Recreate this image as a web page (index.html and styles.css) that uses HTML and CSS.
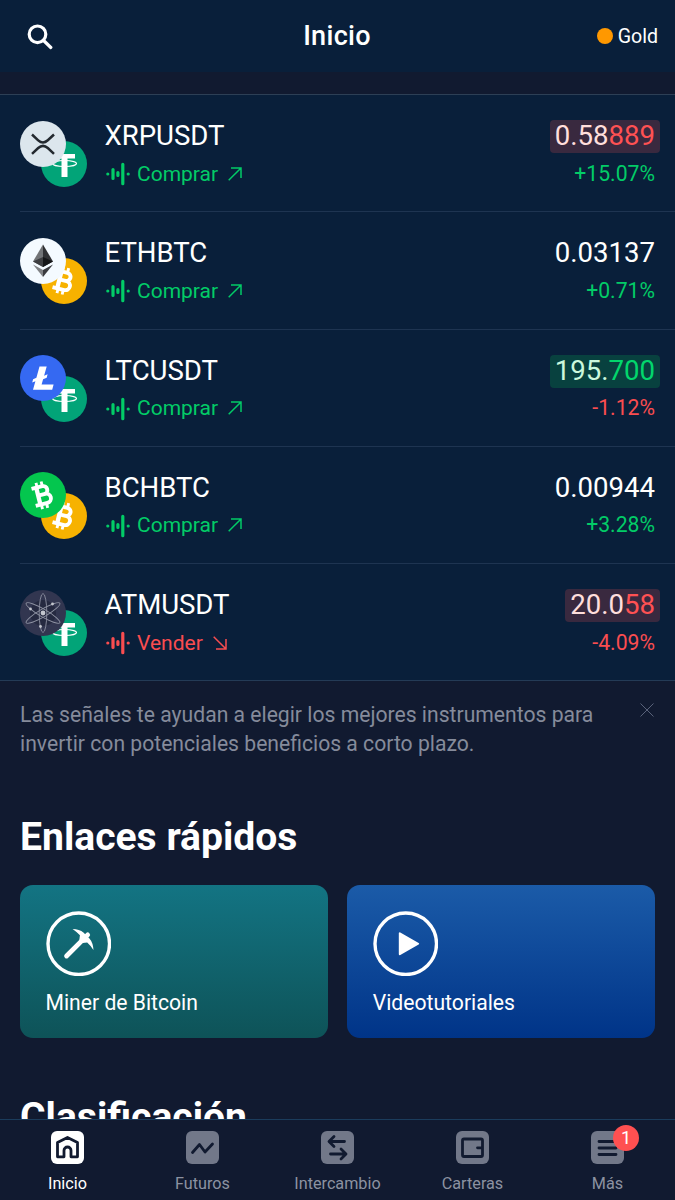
FILE: index.html
```html
<!doctype html>
<html lang="es">
  <head>
    <meta charset="utf-8">
    <title>Inicio</title>
    <link rel="stylesheet" href="styles.css">
  </head>
  <body>
    <svg class="sprite" aria-hidden="true">
      <symbol id="xrp" viewBox="0 0 46 46">
        <circle cx="23" cy="23" r="23" fill="#dce6ed"/>
        <path d="M12 13.500l6.200 5.800q4.800 4.300 9.600 0l6.200-5.800M12 32.800l6.200-5.800q4.800-4.300 9.600 0l6.200 5.800" fill="none" stroke="#23292f" stroke-width="2.500"/>
      </symbol>
      <symbol id="usdt" viewBox="0 0 46 46">
        <circle cx="23" cy="23" r="23" fill="#02a478"/>
        <path d="M13 13h21v4.500h-7.500V36h-6V17.500H13z" fill="#fff"/>
        <ellipse cx="23.500" cy="22.500" rx="12" ry="3" fill="none" stroke="#fff" stroke-width="1.200"/>
      </symbol>
      <symbol id="eth" viewBox="0 0 46 46">
        <circle cx="23" cy="23" r="23" fill="#f4faff"/>
        <path d="M23 6.500L13 23.500l10 5.500z" fill="#727477"/>
        <path d="M23 6.500l10 17L23 29z" fill="#303134"/>
        <path d="M13 23.500l10-4.500v10z" fill="#3d3e41"/>
        <path d="M33 23.500L23 19v10z" fill="#151618"/>
        <path d="M13 26.500l10 5.500v7z" fill="#808285"/>
        <path d="M33 26.500L23 32v7z" fill="#3a3b3f"/>
      </symbol>
      <symbol id="bit" viewBox="0 0 30 30">
        <path d="M5 6h11.500a4 4 0 0 1 0 8.400H10M5 24h12.500a4.600 4.600 0 0 0 0-9.600H10" fill="none" stroke="#fff" stroke-width="4"/>
        <path d="M10 5v20" stroke="#fff" stroke-width="4.500"/>
        <path d="M11 1v5M16.500 1v5M11 24v5M16.500 24v5" stroke="#fff" stroke-width="3"/>
      </symbol>
      <symbol id="btc" viewBox="0 0 46 46">
        <circle cx="23" cy="23" r="23" fill="#f7b200"/>
        <use href="#bit" x="8.500" y="8.500" width="29" height="29" transform="rotate(14 23 23)"/>
      </symbol>
      <symbol id="bch" viewBox="0 0 46 46">
        <circle cx="23" cy="23" r="23" fill="#04c64e"/>
        <use href="#bit" x="8.500" y="8.500" width="29" height="29" transform="rotate(-14 23 23)"/>
      </symbol>
      <symbol id="ltc" viewBox="0 0 46 46">
        <circle cx="23" cy="23" r="23" fill="#3569f2"/>
        <path d="M19.500 11.500h7.200l-2.600 9.200 3.500-1.400-.9 3.400-3.600 1.500-1.500 5.200h12l-1.400 5.300H13l2.400-8.400-3.200 1.300.9-3.400 3.300-1.400z" fill="#fff"/>
      </symbol>
      <symbol id="atom" viewBox="0 0 46 46">
        <circle cx="23" cy="23" r="23" fill="#323650"/>
        <circle cx="23" cy="23" r="13" fill="#252940"/>
        <g fill="none" stroke="#8d91a1" stroke-width="0.900">
          <ellipse cx="23" cy="23" rx="3.800" ry="19.500"/>
          <ellipse cx="23" cy="23" rx="3.800" ry="19.500" transform="rotate(60 23 23)"/>
          <ellipse cx="23" cy="23" rx="3.800" ry="19.500" transform="rotate(-60 23 23)"/>
        </g>
        <g fill="#c3c6ce">
          <circle cx="23" cy="23" r="2.400"/>
          <circle cx="10.500" cy="19" r="1.400"/>
          <circle cx="32.500" cy="14" r="1.400"/>
          <circle cx="20.500" cy="36.500" r="1.400"/>
        </g>
      </symbol>
      <symbol id="signal" viewBox="0 0 24 24">
        <g fill="none" stroke="currentColor" stroke-width="3.200" stroke-linecap="round">
          <path d="M1.800 12h.01M7 7.500v9M11.900 10.600v2.800M16.800 2.300v19.400M22.200 12h.01"/>
        </g>
      </symbol>
      <symbol id="up" viewBox="0 0 14 14">
        <path d="M.7 13.300L13 1M3 1h10v10" fill="none" stroke="currentColor" stroke-width="1.500"/>
      </symbol>
      <symbol id="down" viewBox="0 0 14 14">
        <path d="M.7.7L13 13M3 13h10V3" fill="none" stroke="currentColor" stroke-width="1.500"/>
      </symbol>
    </svg>

    <header class="topbar">
      <svg class="search" viewBox="0 0 26 26"><circle cx="10.500" cy="10.300" r="8.300"/><path d="M16.600 16.500l7.200 7"/></svg>
      <h1>Inicio</h1>
      <div class="status"><i></i>Gold</div>
    </header>

    <main>
      <section class="signals">
        <div class="row">
          <div class="coins"><svg><use href="#usdt"/></svg><svg><use href="#xrp"/></svg></div>
          <div class="pair">
            <div class="name">XRPUSDT</div>
            <div class="hint up"><svg class="bars"><use href="#signal"/></svg>Comprar<svg class="arrow"><use href="#up"/></svg></div>
          </div>
          <div class="quote">
            <div class="price fall">0.58<b>889</b></div>
            <div class="change up">+15.07%</div>
          </div>
        </div>
        <div class="row">
          <div class="coins"><svg><use href="#btc"/></svg><svg><use href="#eth"/></svg></div>
          <div class="pair">
            <div class="name">ETHBTC</div>
            <div class="hint up"><svg class="bars"><use href="#signal"/></svg>Comprar<svg class="arrow"><use href="#up"/></svg></div>
          </div>
          <div class="quote">
            <div class="price">0.03137</div>
            <div class="change up">+0.71%</div>
          </div>
        </div>
        <div class="row">
          <div class="coins"><svg><use href="#usdt"/></svg><svg><use href="#ltc"/></svg></div>
          <div class="pair">
            <div class="name">LTCUSDT</div>
            <div class="hint up"><svg class="bars"><use href="#signal"/></svg>Comprar<svg class="arrow"><use href="#up"/></svg></div>
          </div>
          <div class="quote">
            <div class="price rise">195.<b>700</b></div>
            <div class="change down">-1.12%</div>
          </div>
        </div>
        <div class="row">
          <div class="coins"><svg><use href="#btc"/></svg><svg><use href="#bch"/></svg></div>
          <div class="pair">
            <div class="name">BCHBTC</div>
            <div class="hint up"><svg class="bars"><use href="#signal"/></svg>Comprar<svg class="arrow"><use href="#up"/></svg></div>
          </div>
          <div class="quote">
            <div class="price">0.00944</div>
            <div class="change up">+3.28%</div>
          </div>
        </div>
        <div class="row">
          <div class="coins"><svg><use href="#usdt"/></svg><svg><use href="#atom"/></svg></div>
          <div class="pair">
            <div class="name">ATMUSDT</div>
            <div class="hint down"><svg class="bars"><use href="#signal"/></svg>Vender<svg class="arrow"><use href="#down"/></svg></div>
          </div>
          <div class="quote">
            <div class="price fall">20.0<b>58</b></div>
            <div class="change down">-4.09%</div>
          </div>
        </div>
      </section>

      <div class="note">
        <p>Las señales te ayudan a elegir los mejores instrumentos para invertir con potenciales beneficios a corto plazo.</p>
        <svg class="close" viewBox="0 0 14 14"><path d="M.5.5l13 13M13.500.5l-13 13"/></svg>
      </div>

      <h2>Enlaces rápidos</h2>
      <div class="links">
        <a class="card miner">
          <svg viewBox="0 0 66 66">
            <circle cx="33" cy="33" r="31" fill="none" stroke="#fff" stroke-width="3.400"/>
            <path d="M20.700 45.300L42 24" stroke="#fff" stroke-width="4.800" stroke-linecap="round"/>
            <path d="M26.800 18.200Q33.500 18.300 38 21.800L43.800 27.600Q47.500 32 47.800 39.200Q45.500 35.500 41.500 31.800L37 32.300 33.600 29 34.200 24.500Q30.500 20.800 26.800 18.200z" fill="#fff"/>
          </svg>
          <span>Miner de Bitcoin</span>
        </a>
        <a class="card video">
          <svg viewBox="0 0 66 66">
            <circle cx="33" cy="33" r="31" fill="none" stroke="#fff" stroke-width="3.400"/>
            <path d="M27 22.500v21L45.500 33z" fill="#fff" stroke="#fff" stroke-width="2" stroke-linejoin="round"/>
          </svg>
          <span>Videotutoriales</span>
        </a>
      </div>

      <h2 class="ranking">Clasificación</h2>
    </main>

    <nav class="tabs">
      <a class="tab active">
        <svg viewBox="0 0 33 33"><rect width="33" height="33" rx="6"/><path d="M6.500 11.500l10-5 10 5v14.300H20v-6.300a3.500 3.500 0 0 0-7 0v6.300H6.500z"/></svg>
        Inicio
      </a>
      <a class="tab">
        <svg viewBox="0 0 33 33"><rect width="33" height="33" rx="6"/><path d="M6.500 21.500l7-8 5.500 7.500 7.500-8"/></svg>
        Futuros
      </a>
      <a class="tab">
        <svg viewBox="0 0 33 33"><rect width="33" height="33" rx="6"/><path d="M23.500 10.500H8.500M13 5.500l-5 5 5 5M9.500 23h15M20 18l5 5-5 5"/></svg>
        Intercambio
      </a>
      <a class="tab">
        <svg viewBox="0 0 33 33"><rect width="33" height="33" rx="6"/><rect class="line" x="6.500" y="8" width="20" height="17.500" rx="1.500"/><path d="M21.500 16.800h4"/></svg>
        Carteras
      </a>
      <a class="tab">
        <svg viewBox="0 0 33 33"><rect width="33" height="33" rx="6"/><path d="M8 10.500h17M8 17h17M8 23.500h17"/></svg>
        Más
        <span class="badge">1</span>
      </a>
    </nav>
  </body>
</html>
```
FILE: styles.css
```css
* { box-sizing: border-box; }
body {
  margin: 0;
  height: 1200px;
  display: flex;
  flex-direction: column;
  overflow: hidden;
  background: #111a30;
  color: #fff;
  font-family: Roboto, sans-serif;
}
.sprite { position: absolute; width: 0; height: 0; }
svg { display: block; flex: none; }

.topbar {
  flex: none;
  height: 72px;
  padding: 0 17px 0 27px;
  display: grid;
  grid-template-columns: 1fr auto 1fr;
  align-items: center;
  background: #091f3a;
}
.topbar h1 {
  margin: 0 0 0 -11px;
  font-size: 27px;
  font-weight: 500;
  letter-spacing: 0.3px;
}
.search {
  width: 26px;
  height: 26px;
  margin-top: 1px;
  fill: none;
  stroke: #fff;
  stroke-width: 3.2;
  stroke-linecap: round;
}
.status {
  justify-self: end;
  display: flex;
  align-items: center;
  gap: 5px;
  font-size: 19.6px;
}
.status i {
  width: 16px;
  height: 16px;
  border-radius: 50%;
  background: #ff9800;
}

main {
  flex: 1;
  min-height: 0;
  overflow: hidden;
  padding-top: 22px;
}
.signals {
  background: #091f3a;
  border-top: 1px solid #2d3f55;
  border-bottom: 1px solid #243b56;
}
.row {
  display: flex;
  height: 117.3px;
  margin-left: 20px;
  padding: 25px 20px 0 0;
  border-bottom: 1px solid #1e3451;
}
.row:last-child { border-bottom: 0; height: 116px; }
.coins {
  display: grid;
  width: 66.5px;
  height: 66.5px;
  margin: 0.5px 18px 0 0;
}
.coins svg {
  grid-area: 1 / 1;
  width: 46px;
  height: 46px;
}
.coins svg:first-child { place-self: end; }
.name, .price {
  height: 33px;
  font-size: 27.6px;
  line-height: 32px;
}
.name { letter-spacing: -0.05px; }
.hint, .change {
  margin-top: 6.5px;
  font-size: 21px;
  line-height: 28px;
}
.change { font-size: 21.2px; }
.hint {
  display: flex;
  align-items: center;
}
.bars {
  width: 24px;
  height: 24px;
  margin: 1px 7.5px 0 1px;
}
.arrow {
  width: 14px;
  height: 14px;
  margin-left: 10px;
}
.up { color: #02cc67; }
.down { color: #fa4d50; }
.quote {
  margin-left: auto;
  display: flex;
  flex-direction: column;
  align-items: flex-end;
}
.price {
  margin-right: -5px;
  padding: 0 5px;
  border-radius: 4px;
}
.price b { font-weight: 400; }
.fall { background: #39293f; color: #ffdedc; }
.fall b { color: #ff5153; }
.rise { background: #08413f; color: #cbf8dd; }
.rise b { color: #02d66c; }

.note {
  display: flex;
  justify-content: space-between;
  padding: 18.7px 21px 0 20px;
  color: #858b9b;
}
.note p {
  width: 590px;
  margin: 0;
  font-size: 21.15px;
  line-height: 29.3px;
}
.close {
  width: 14px;
  height: 14px;
  margin-top: 3px;
  stroke: #59627a;
  stroke-width: 1;
}

h2 {
  margin: 54.8px 20px 0;
  font-size: 39.1px;
  line-height: 48px;
  font-weight: 700;
}
.links {
  display: grid;
  grid-template-columns: 1fr 1fr;
  gap: 19px;
  padding: 23.5px 20px 0 19.5px;
}
.card {
  height: 153px;
  padding: 26px 26px 0;
  border-radius: 13px;
  font-size: 21.15px;
}
.card svg {
  width: 65.5px;
  height: 65.5px;
  margin-bottom: 14px;
}
.miner { background: linear-gradient(#137483, #0e5358); }
.video { background: linear-gradient(#1b5ba8, #003488); }

.tabs {
  flex: none;
  height: 81px;
  display: grid;
  grid-template-columns: repeat(5, 1fr);
  border-top: 1px solid #1b3c5c;
  background: #111a30;
}
.tab {
  position: relative;
  display: flex;
  flex-direction: column;
  align-items: center;
  padding-top: 11px;
  gap: 10px;
  font-size: 16.2px;
  line-height: 20px;
  color: #8c92a1;
}
.tab svg {
  width: 33px;
  height: 33px;
  fill: #727889;
}
.tab path, .tab .line {
  fill: none;
  stroke: #111a30;
  stroke-width: 2.8;
  stroke-linecap: round;
  stroke-linejoin: round;
}
.active { color: #fff; }
.active svg { fill: #fff; }
.badge {
  position: absolute;
  top: 5px;
  left: 73px;
  width: 26px;
  height: 26px;
  border-radius: 50%;
  background: #ff5051;
  color: #fff;
  font-size: 18px;
  line-height: 26px;
  text-align: center;
}
```
